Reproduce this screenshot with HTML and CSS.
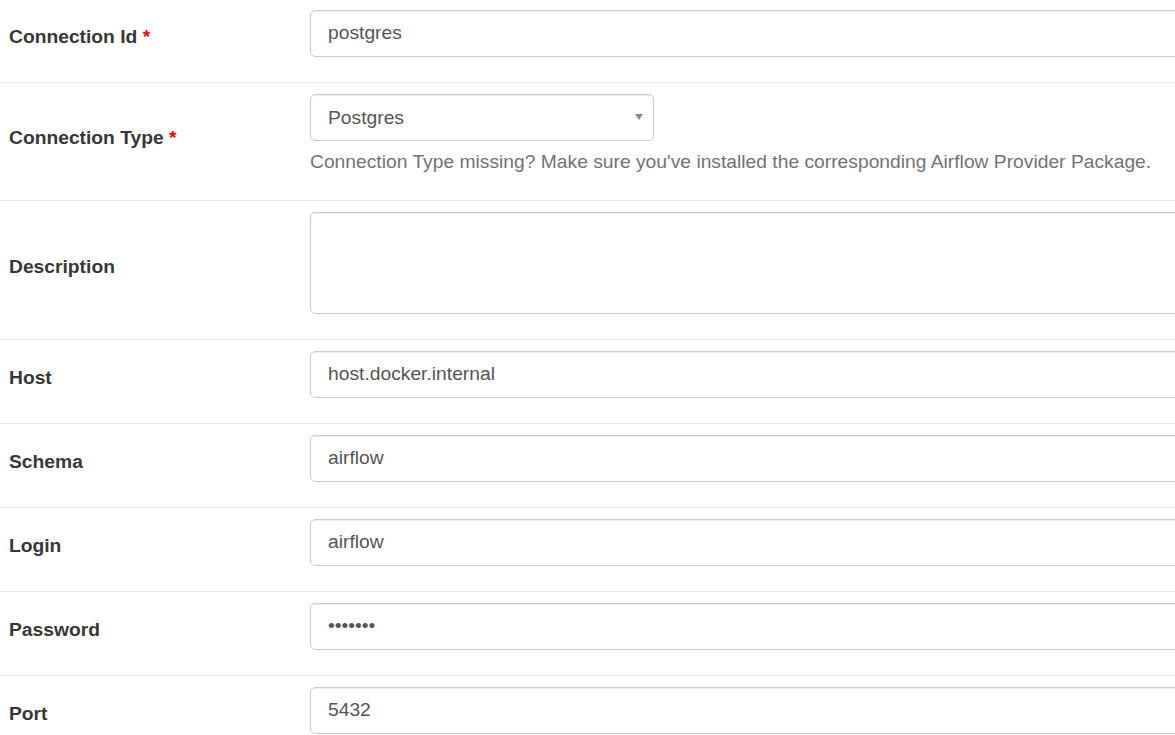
FILE: index.html
```html
<!DOCTYPE html>
<html lang="en">
<head>
<meta charset="utf-8">
<title>Edit Connection</title>
<link rel="stylesheet" href="styles.css">
</head>
<body>
<form class="conn-form">
  <div class="form-row">
    <div class="label-cell"><label for="conn_id">Connection Id <span class="required">*</span></label></div>
    <div class="field-cell"><input class="control wide" id="conn_id" type="text" value="postgres"></div>
  </div>
  <div class="form-row">
    <div class="label-cell"><label for="conn_type">Connection Type <span class="required">*</span></label></div>
    <div class="field-cell">
      <div class="select-wrap">
        <select class="control select" id="conn_type">
          <option>Postgres</option>
        </select>
      </div>
      <p class="help-block">Connection Type missing? Make sure you've installed the corresponding Airflow Provider Package.</p>
    </div>
  </div>
  <div class="form-row">
    <div class="label-cell"><label for="description">Description</label></div>
    <div class="field-cell"><textarea class="control wide textarea" id="description"></textarea></div>
  </div>
  <div class="form-row">
    <div class="label-cell"><label for="host">Host</label></div>
    <div class="field-cell"><input class="control wide" id="host" type="text" value="host.docker.internal"></div>
  </div>
  <div class="form-row">
    <div class="label-cell"><label for="schema">Schema</label></div>
    <div class="field-cell"><input class="control wide" id="schema" type="text" value="airflow"></div>
  </div>
  <div class="form-row">
    <div class="label-cell"><label for="login">Login</label></div>
    <div class="field-cell"><input class="control wide" id="login" type="text" value="airflow"></div>
  </div>
  <div class="form-row">
    <div class="label-cell"><label for="password">Password</label></div>
    <div class="field-cell"><input class="control wide" id="password" type="password" value="airflow"></div>
  </div>
  <div class="form-row">
    <div class="label-cell"><label for="port">Port</label></div>
    <div class="field-cell"><input class="control wide" id="port" type="text" value="5432"></div>
  </div>
</form>
</body>
</html>
```

FILE: styles.css
```css
html, body {
  margin: 0;
  padding: 0;
  background: #fff;
  overflow: hidden;
}

body {
  font-family: "Liberation Sans", Arial, sans-serif;
  font-size: 19.25px;
  line-height: 1.43;
  color: #333;
}

.conn-form {
  width: 100%;
}

.form-row {
  display: grid;
  grid-template-columns: 300px minmax(0, 1fr);
  border-top: 1px solid #e8e8e8;
}

.form-row:first-child {
  border-top: none;
}

.label-cell {
  display: flex;
  align-items: center;
  padding: 11px 9px;
}

.form-row:first-child .label-cell,
.form-row:first-child .field-cell {
  padding-top: 10px;
}

.label-cell label {
  font-weight: bold;
  color: #373737;
  margin-bottom: 7px;
}

.required {
  color: #f00;
}

/* the field column runs on past the right edge of the window */
.field-cell {
  padding: 11px 0 11px 10px;
  overflow: hidden;
}

.control {
  display: block;
  box-sizing: border-box;
  width: 100%;
  height: 47px;
  margin: 0 0 14px;
  padding: 7px 17px 9px;
  font-family: inherit;
  font-size: 19.25px;
  color: #555;
  background: #fff;
  border: 1px solid #ccc;
  border-radius: 5px;
  box-shadow: inset 0 1px 1px rgba(0, 0, 0, 0.075);
  outline: none;
}

.wide {
  width: calc(100% + 80px);
}

.textarea {
  height: 102px;
  resize: none;
}

.select-wrap {
  position: relative;
  width: 344px;
}

.select {
  -webkit-appearance: none;
  appearance: none;
  margin-bottom: 0;
  padding: 8px 32px 8px 17px;
}

/* small dropdown caret on the right of the select */
.select-wrap::after {
  content: "";
  position: absolute;
  top: 20px;
  right: 11px;
  border-left: 4px solid transparent;
  border-right: 4px solid transparent;
  border-top: 6px solid #888;
  pointer-events: none;
}

.help-block {
  margin: 7px 0 14px;
  line-height: 27px;
  color: #737373;
}
```
